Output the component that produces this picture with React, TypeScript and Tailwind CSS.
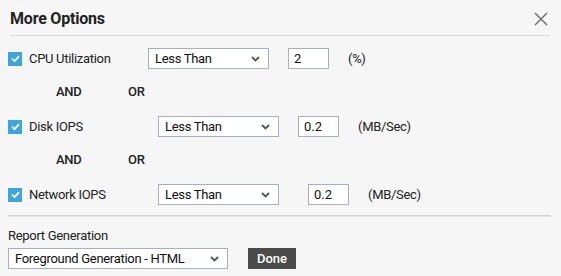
import React from "react";

const font = { fontFamily: "Roboto, 'Liberation Sans', sans-serif" };

function Check() {
  return (
    <span className="flex h-[14px] w-[14px] shrink-0 items-center justify-center bg-[#3ea6dc]">
      <svg width="9" height="8" viewBox="0 0 9 8">
        <polyline points="1.5,4.2 3.6,6.2 7.6,1.6" fill="none" stroke="#fff" strokeWidth="1.8" strokeLinecap="round" strokeLinejoin="round" />
      </svg>
    </span>
  );
}

function Chevron() {
  return (
    <svg width="9" height="6" viewBox="0 0 9 6">
      <polyline points="1,1 4.5,4.5 8,1" fill="none" stroke="#555" strokeWidth="1.8" />
    </svg>
  );
}

function Select({ text, w }: { text: string; w: string }) {
  return (
    <div className={`flex h-[21px] shrink-0 items-center justify-between border border-[#a9aec1] bg-white pl-[6px] pr-[8px] text-[13px] tracking-[-0.3px] text-[#111] ${w}`}>
      <span>{text}</span>
      <Chevron />
    </div>
  );
}

function Input({ v }: { v: string }) {
  return (
    <div className="flex h-[21px] w-[41px] shrink-0 items-center border border-[#a9aec1] bg-white pl-[5px] text-[13px] text-[#111]">
      {v}
    </div>
  );
}

function Row({ label, lw, gap, unit }: { label: string; lw: string; gap: string; unit: string }) {
  return (
    <div className="flex h-[21px] items-center pl-[8px]">
      <Check />
      <span className={`shrink-0 pl-[7px] text-[13px] tracking-[-0.3px] text-[#222] ${lw}`}>{label}</span>
      <Select text="Less Than" w="w-[121px]" />
      <div className={gap} />
      <Input v={unit === "(%)" ? "2" : "0.2"} />
      <span className="pl-[19px] text-[13px] tracking-[-0.3px] text-[#222]">{unit}</span>
    </div>
  );
}

function AndOr() {
  return (
    <div className="flex h-[20px] items-center pl-[56px] text-[13px] font-medium tracking-[-0.3px] text-[#222]">
      <span className="w-[72px]">AND</span>
      <span>OR</span>
    </div>
  );
}

export default function App() {
  return (
    <div className="h-[276px] w-[561px] overflow-hidden bg-[#f6f6f6]" style={font}>
      <div className="ml-[10px] mr-[11px] flex h-[36px] items-start justify-between border-b border-[#dcdcdc]">
        <span className="mt-[9px] text-[16px] font-bold leading-[20px] tracking-[-0.2px] text-[#222]">More Options</span>
        <svg className="mr-[2px] mt-[12px]" width="14" height="14" viewBox="0 0 14 14">
          <path d="M1 1 L13 13 M13 1 L1 13" stroke="#707070" strokeWidth="1.5" fill="none" />
        </svg>
      </div>
      <div className="mt-[12px]">
        <Row label="CPU Utilization" lw="w-[126px]" gap="w-[19px]" unit="(%)" />
      </div>
      <div className="mt-[13px]"><AndOr /></div>
      <div className="mt-[14px]">
        <Row label="Disk IOPS" lw="w-[136px]" gap="w-[19px]" unit="(MB/Sec)" />
      </div>
      <div className="mt-[13px]"><AndOr /></div>
      <div className="mt-[14px]">
        <Row label="Network IOPS" lw="w-[136px]" gap="w-[29px]" unit="(MB/Sec)" />
      </div>
      <div className="ml-[8px] mr-[10px] mt-[10px] h-[2px] border-t border-[#d2d2d2] bg-[#e4e4e4]" />
      <div className="pl-[8px] pt-[11px] text-[13px] leading-[16px] tracking-[-0.3px] text-[#222]">Report Generation</div>
      <div className="mt-[4px] flex items-center pl-[8px]">
        <Select text="Foreground Generation - HTML" w="w-[220px]" />
        <div className="ml-[20px] flex h-[21px] w-[48px] items-center justify-center bg-[#4a4a4a] text-[13px] font-medium text-white">Done</div>
      </div>
    </div>
  );
}
